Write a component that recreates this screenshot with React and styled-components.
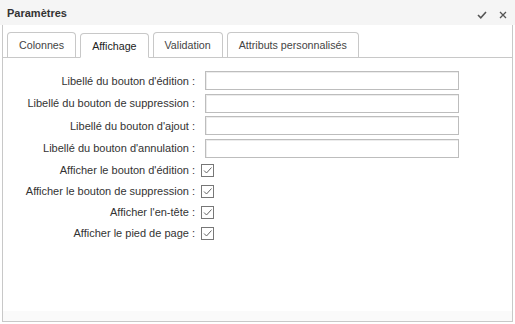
import React from 'react';
import styled, { createGlobalStyle } from 'styled-components';

const GlobalStyle = createGlobalStyle`
  html, body {
    margin: 0;
    padding: 0;
    background: #ffffff;
  }
  body {
    font-family: "Liberation Sans", Arial, sans-serif;
    color: #333;
  }
`;

const TABS = ['Colonnes', 'Affichage', 'Validation', 'Attributs personnalisés'];

const TEXT_FIELDS = [
  "Libellé du bouton d'édition :",
  'Libellé du bouton de suppression :',
  "Libellé du bouton d'ajout :",
  "Libellé du bouton d'annulation :",
];

const CHECK_FIELDS = [
  "Afficher le bouton d'édition :",
  'Afficher le bouton de suppression :',
  "Afficher l'en-tête :",
  'Afficher le pied de page :',
];

const App = () => {
  return (
    <>
      <GlobalStyle />
      <Dialog>
        <Header>
          <Title>Paramètres</Title>
          <HeaderActions>
            <IconButton aria-label="Valider">
              <svg width="10" height="8" viewBox="0 0 10 8">
                <polyline points="1,4 3.8,6.8 9,1" fill="none" stroke="#555" strokeWidth="1.6" />
              </svg>
            </IconButton>
            <IconButton aria-label="Fermer">
              <svg width="8" height="8" viewBox="0 0 8 8">
                <path d="M1 1 L7 7 M7 1 L1 7" stroke="#555" strokeWidth="1.3" />
              </svg>
            </IconButton>
          </HeaderActions>
        </Header>

        <Panel>
          <TabBar>
            {TABS.map((tab) => (
              <Tab key={tab} active={tab === 'Affichage'}>{tab}</Tab>
            ))}
          </TabBar>

          <Form>
            {TEXT_FIELDS.map((label) => (
              <InputRow key={label}>
                <Label>{label}</Label>
                <TextInput type="text" />
              </InputRow>
            ))}
            {CHECK_FIELDS.map((label) => (
              <CheckRow key={label}>
                <Label>{label}</Label>
                <CheckBox>
                  <svg width="11" height="11" viewBox="0 0 11 11">
                    <polyline points="2,5.5 4.5,8 9.5,2.5" fill="none" stroke="#666" strokeWidth="1" />
                  </svg>
                </CheckBox>
              </CheckRow>
            ))}
          </Form>

          <FooterStrip />
        </Panel>
      </Dialog>
    </>
  );
};

const Dialog = styled.div`
  width: 515px;
  height: 324px;
  display: flex;
  flex-direction: column;
  background: #fff;
`;

const Header = styled.div`
  height: 25px;
  flex-shrink: 0;
  display: flex;
  align-items: center;
  justify-content: space-between;
  padding: 0 8px 0 7px;
  background: #f5f5f5;
  box-sizing: border-box;
`;

const Title = styled.span`
  font-size: 11px;
  font-weight: bold;
  color: #333;
`;

const HeaderActions = styled.div`
  display: flex;
  align-items: center;
  gap: 12px;
  padding-top: 4px;
`;

const IconButton = styled.span`
  display: flex;
  align-items: center;
  justify-content: center;
  cursor: pointer;
`;

const Panel = styled.div`
  flex: 1;
  margin: 0 2px 2px 2px;
  border: 1px solid #c8c8c8;
  border-top: none;
  display: flex;
  flex-direction: column;
  min-height: 0;
`;

const TabBar = styled.div`
  display: flex;
  align-items: flex-end;
  gap: 4px;
  padding: 7px 0 0 4px;
  border-bottom: 1px solid #c8c8c8;
`;

const Tab = styled.div`
  height: 25px;
  box-sizing: border-box;
  padding: 0 11px;
  display: flex;
  align-items: center;
  font-size: 10.7px;
  color: ${props => (props.active ? '#222' : '#444')};
  background: #fff;
  border: 1px solid #c8c8c8;
  border-bottom: ${props => (props.active ? '1px solid #fff' : 'none')};
  border-radius: 4px 4px 0 0;
  margin-bottom: ${props => (props.active ? '-1px' : '0')};
  cursor: pointer;
`;

const Form = styled.div`
  flex: 1;
  display: flex;
  flex-direction: column;
  padding-top: 11.5px;
`;

const InputRow = styled.div`
  height: 22.5px;
  display: flex;
  align-items: center;
  gap: 10px;
`;

const CheckRow = styled.div`
  height: 21px;
  display: flex;
  align-items: center;
  gap: 6px;
`;

const Label = styled.span`
  width: 192px;
  flex-shrink: 0;
  text-align: right;
  font-size: 11px;
  color: #333;
  white-space: nowrap;
`;

const TextInput = styled.input`
  width: 254px;
  height: 19px;
  box-sizing: border-box;
  margin: 0;
  padding: 0 4px;
  border: 1px solid #bdbdbd;
  box-shadow: inset 1px 1px 0 #ececec;
  background: #fff;
  font-family: inherit;
  font-size: 11px;
  outline: none;
`;

const CheckBox = styled.span`
  width: 13px;
  height: 13px;
  box-sizing: border-box;
  border: 1px solid #777;
  background: #fff;
  display: flex;
  align-items: center;
  justify-content: center;
`;

const FooterStrip = styled.div`
  height: 10px;
  background: #fafafa;
  flex-shrink: 0;
`;

export default App;
